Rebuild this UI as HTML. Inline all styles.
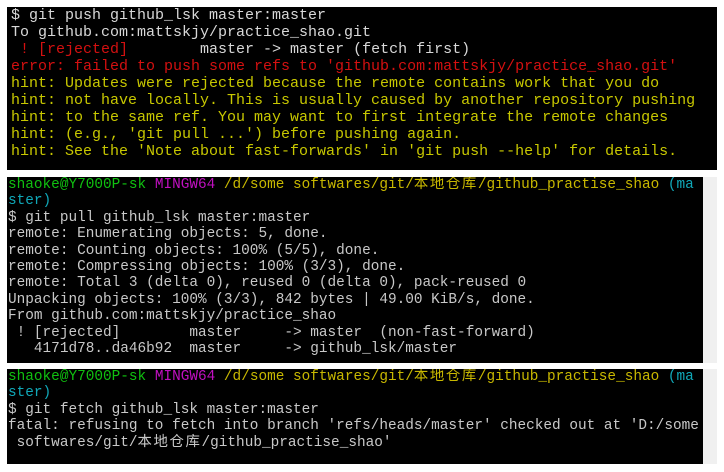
<!DOCTYPE html>
<html><head><meta charset="utf-8"><style>
body{margin:0;background:#fff;width:724px;height:472px;position:relative;overflow:hidden}
.p{position:absolute;background:#000;white-space:pre;font-family:"Liberation Mono","Noto Sans CJK SC",monospace;overflow:hidden}
#a{left:7px;top:7px;width:710px;height:163px;font-size:15px;line-height:17px;color:#d8d8d8;padding:0}
#a .t{position:absolute;left:4px;top:0px}
#b{left:7px;top:177px;width:696px;height:186px;font-size:14.4px;line-height:16.4px;color:#c8c8c8}
#c{left:7px;top:369px;width:696px;height:95px;font-size:14.4px;line-height:16.4px;color:#c8c8c8}
.sb{position:absolute;left:703px;width:14px;background:#f0f0f0}
.t{position:absolute;left:1px;top:0}
.k{letter-spacing:1.6px}
.r{color:#d41010}.y{color:#c8c800}.g{color:#10c010}.m{color:#c010c0}.c{color:#10a8b8}.yy{color:#c8b800}
</style></head><body>
<div class="p" id="a"><div class="t">$ git push github_lsk master:master
To github.com:mattskjy/practice_shao.git
<span class="r"> ! [rejected]</span>        master -&gt; master (fetch first)
<span class="r">error: failed to push some refs to 'github.com:mattskjy/practice_shao.git'</span>
<span class="y">hint: Updates were rejected because the remote contains work that you do
hint: not have locally. This is usually caused by another repository pushing
hint: to the same ref. You may want to first integrate the remote changes
hint: (e.g., 'git pull ...') before pushing again.
hint: See the 'Note about fast-forwards' in 'git push --help' for details.</span></div></div>
<div class="p" id="b"><div class="t"><span class="g">shaoke@Y7000P-sk</span> <span class="m">MINGW64</span> <span class="yy">/d/some softwares/git/<span class="k">本地仓库</span>/github_practise_shao</span> <span class="c">(ma
ster)</span>
$ git pull github_lsk master:master
remote: Enumerating objects: 5, done.
remote: Counting objects: 100% (5/5), done.
remote: Compressing objects: 100% (3/3), done.
remote: Total 3 (delta 0), reused 0 (delta 0), pack-reused 0
Unpacking objects: 100% (3/3), 842 bytes | 49.00 KiB/s, done.
From github.com:mattskjy/practice_shao
 ! [rejected]        master     -&gt; master  (non-fast-forward)
   4171d78..da46b92  master     -&gt; github_lsk/master</div></div>
<div class="sb" style="top:177px;height:186px"></div>
<div class="p" id="c"><div class="t"><span class="g">shaoke@Y7000P-sk</span> <span class="m">MINGW64</span> <span class="yy">/d/some softwares/git/<span class="k">本地仓库</span>/github_practise_shao</span> <span class="c">(ma
ster)</span>
$ git fetch github_lsk master:master
fatal: refusing to fetch into branch 'refs/heads/master' checked out at 'D:/some
 softwares/git/<span class="k">本地仓库</span>/github_practise_shao'</div></div>
<div class="sb" style="top:369px;height:95px"></div>
</body></html>
